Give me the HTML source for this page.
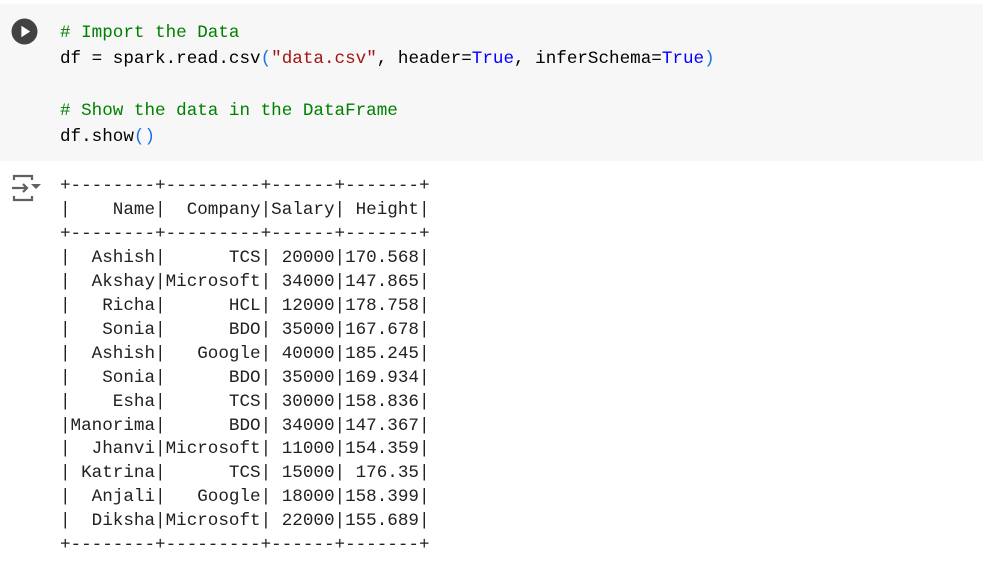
<!DOCTYPE html>
<html><head><style>
body{margin:0;width:983px;height:571px;background:#fff;overflow:hidden;position:relative;font-family:"Liberation Mono",monospace;}
.cell{position:absolute;left:0;top:4px;width:983px;height:157px;background:#f7f7f7;}
pre{margin:0;position:absolute;left:60px;font-family:"Liberation Mono",monospace;font-size:17.6px;white-space:pre;}
.code{top:20px;line-height:26px;color:#000;}
.c{color:#008000}.s{color:#a31515}.k{color:#0000ff}.p{color:#1a73e8}
.out{top:175px;line-height:23.95px;color:#212121;}
</style></head><body>
<div class="cell"></div>
<svg style="position:absolute;left:11px;top:18px" width="27" height="27" viewBox="0 0 26 26"><circle cx="13" cy="13" r="12.5" fill="#424242"/><path d="M10 7.5L18.5 13L10 18.5Z" fill="#fff"/></svg>
<pre class="code"><span class="c"># Import the Data</span>
df = spark.read.csv<span class="p">(</span><span class="s">"data.csv"</span>, header=<span class="k">True</span>, inferSchema=<span class="k">True</span><span class="p">)</span>

<span class="c"># Show the data in the DataFrame</span>
df.show<span class="p">()</span></pre>
<svg style="position:absolute;left:11px;top:173px" width="32" height="30" viewBox="0 0 32 30"><g fill="none" stroke="#616161" stroke-width="2.2"><path d="M3 7V3H21V7"/><path d="M3 23V27H21V23"/><path d="M1 15H16M12 11L16 15L12 19"/></g><path d="M20 11H30L25 16Z" fill="#616161"/></svg>
<pre class="out">+--------+---------+------+-------+
|    Name|  Company|Salary| Height|
+--------+---------+------+-------+
|  Ashish|      TCS| 20000|170.568|
|  Akshay|Microsoft| 34000|147.865|
|   Richa|      HCL| 12000|178.758|
|   Sonia|      BDO| 35000|167.678|
|  Ashish|   Google| 40000|185.245|
|   Sonia|      BDO| 35000|169.934|
|    Esha|      TCS| 30000|158.836|
|Manorima|      BDO| 34000|147.367|
|  Jhanvi|Microsoft| 11000|154.359|
| Katrina|      TCS| 15000| 176.35|
|  Anjali|   Google| 18000|158.399|
|  Diksha|Microsoft| 22000|155.689|
+--------+---------+------+-------+</pre>
</body></html>
